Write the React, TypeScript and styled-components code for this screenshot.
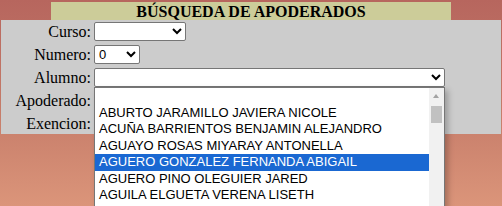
import React from 'react'
import styled, { createGlobalStyle } from 'styled-components'

const GlobalStyle = createGlobalStyle`
  html, body {
    margin: 0;
    padding: 0;
  }
  body {
    background: linear-gradient(180deg, #b7665e 0%, #c47a68 50%, #db957a 100%);
    font-family: "Liberation Serif", "Times New Roman", serif;
    overflow: hidden;
  }
`

const alumnos = [
  '',
  'ABURTO JARAMILLO JAVIERA NICOLE',
  'ACUÑA BARRIENTOS BENJAMIN ALEJANDRO',
  'AGUAYO ROSAS MIYARAY ANTONELLA',
  'AGUERO GONZALEZ FERNANDA ABIGAIL',
  'AGUERO PINO OLEGUIER JARED',
  'AGUILA ELGUETA VERENA LISETH'
]

export default function App() {
  return (
    <>
      <GlobalStyle />
      <Page>
        <Panel>
          <Title>BÚSQUEDA DE APODERADOS</Title>
          <Form>
            <Label>Curso:</Label>
            <Field>
              <Select $width={92} defaultValue="">
                <option value=""></option>
              </Select>
            </Field>
            <Label>Numero:</Label>
            <Field>
              <Select $width={46} defaultValue="0">
                <option value="0">0</option>
              </Select>
            </Field>
            <Label>Alumno:</Label>
            <Field>
              <Select $width={351} defaultValue="">
                <option value=""></option>
              </Select>
            </Field>
            <Label>Apoderado:</Label>
            <Field />
            <Label>Exencion:</Label>
            <Field />
          </Form>
        </Panel>

        <Popup>
          <List>
            {alumnos.map((a, i) => (
              <Item key={i} $selected={i === 4}>
                {a}
              </Item>
            ))}
          </List>
          <Scrollbar>
            <UpArrow />
            <Thumb />
          </Scrollbar>
        </Popup>
      </Page>
    </>
  )
}

const Page = styled.div`
  position: relative;
  height: 206px;
  padding: 2px 0 0 1px;
  box-sizing: border-box;
  overflow: hidden;
`

const Panel = styled.div`
  width: 500px;
`

const Title = styled.div`
  width: 400px;
  height: 18px;
  margin: 0 auto;
  background: #cccc99;
  color: #000;
  font-weight: bold;
  font-size: 16px;
  line-height: 19px;
  text-align: center;
`

const Form = styled.div`
  display: grid;
  grid-template-columns: 90px 1fr;
  grid-auto-rows: 19px;
  column-gap: 3px;
  row-gap: 4px;
  padding: 2px 0 1px;
  background: #cccccc;
`

const Label = styled.div`
  font-size: 16px;
  line-height: 19px;
  text-align: right;
  color: #000;
`

const Field = styled.div`
  display: flex;
  align-items: center;
`

const Select = styled.select<{ $width: number }>`
  width: ${p => p.$width}px;
  height: 19px;
  box-sizing: border-box;
  font-family: "Liberation Sans", Arial, sans-serif;
  font-size: 13px;
  color: #000;
  background: #fff;
  border: 1px solid #767676;
  border-radius: 2px;
  margin: 0;
`

const Popup = styled.div`
  position: absolute;
  left: 94px;
  top: 87px;
  width: 351px;
  height: 122px;
  box-sizing: border-box;
  display: flex;
  background: #fff;
  border: 1px solid #767676;
  border-bottom: none;
  box-shadow: 3px 3px 6px rgba(0, 0, 0, 0.25);
  overflow: hidden;
`

const List = styled.div`
  flex: 1;
`

const Item = styled.div<{ $selected?: boolean }>`
  height: 16.5px;
  line-height: 16.5px;
  padding-left: 4px;
  font-family: "Liberation Sans", Arial, sans-serif;
  font-size: 13px;
  white-space: nowrap;
  color: ${p => (p.$selected ? '#fff' : '#000')};
  background: ${p => (p.$selected ? '#1a68d2' : 'transparent')};
`

const Scrollbar = styled.div`
  width: 15px;
  background: #f1f1f1;
  position: relative;
`

const UpArrow = styled.div`
  position: absolute;
  left: 4px;
  top: 6px;
  width: 0;
  height: 0;
  border-left: 3.5px solid transparent;
  border-right: 3.5px solid transparent;
  border-bottom: 4px solid #a3a3a3;
`

const Thumb = styled.div`
  position: absolute;
  left: 2px;
  top: 18px;
  width: 11px;
  height: 17px;
  background: #c1c1c1;
`
